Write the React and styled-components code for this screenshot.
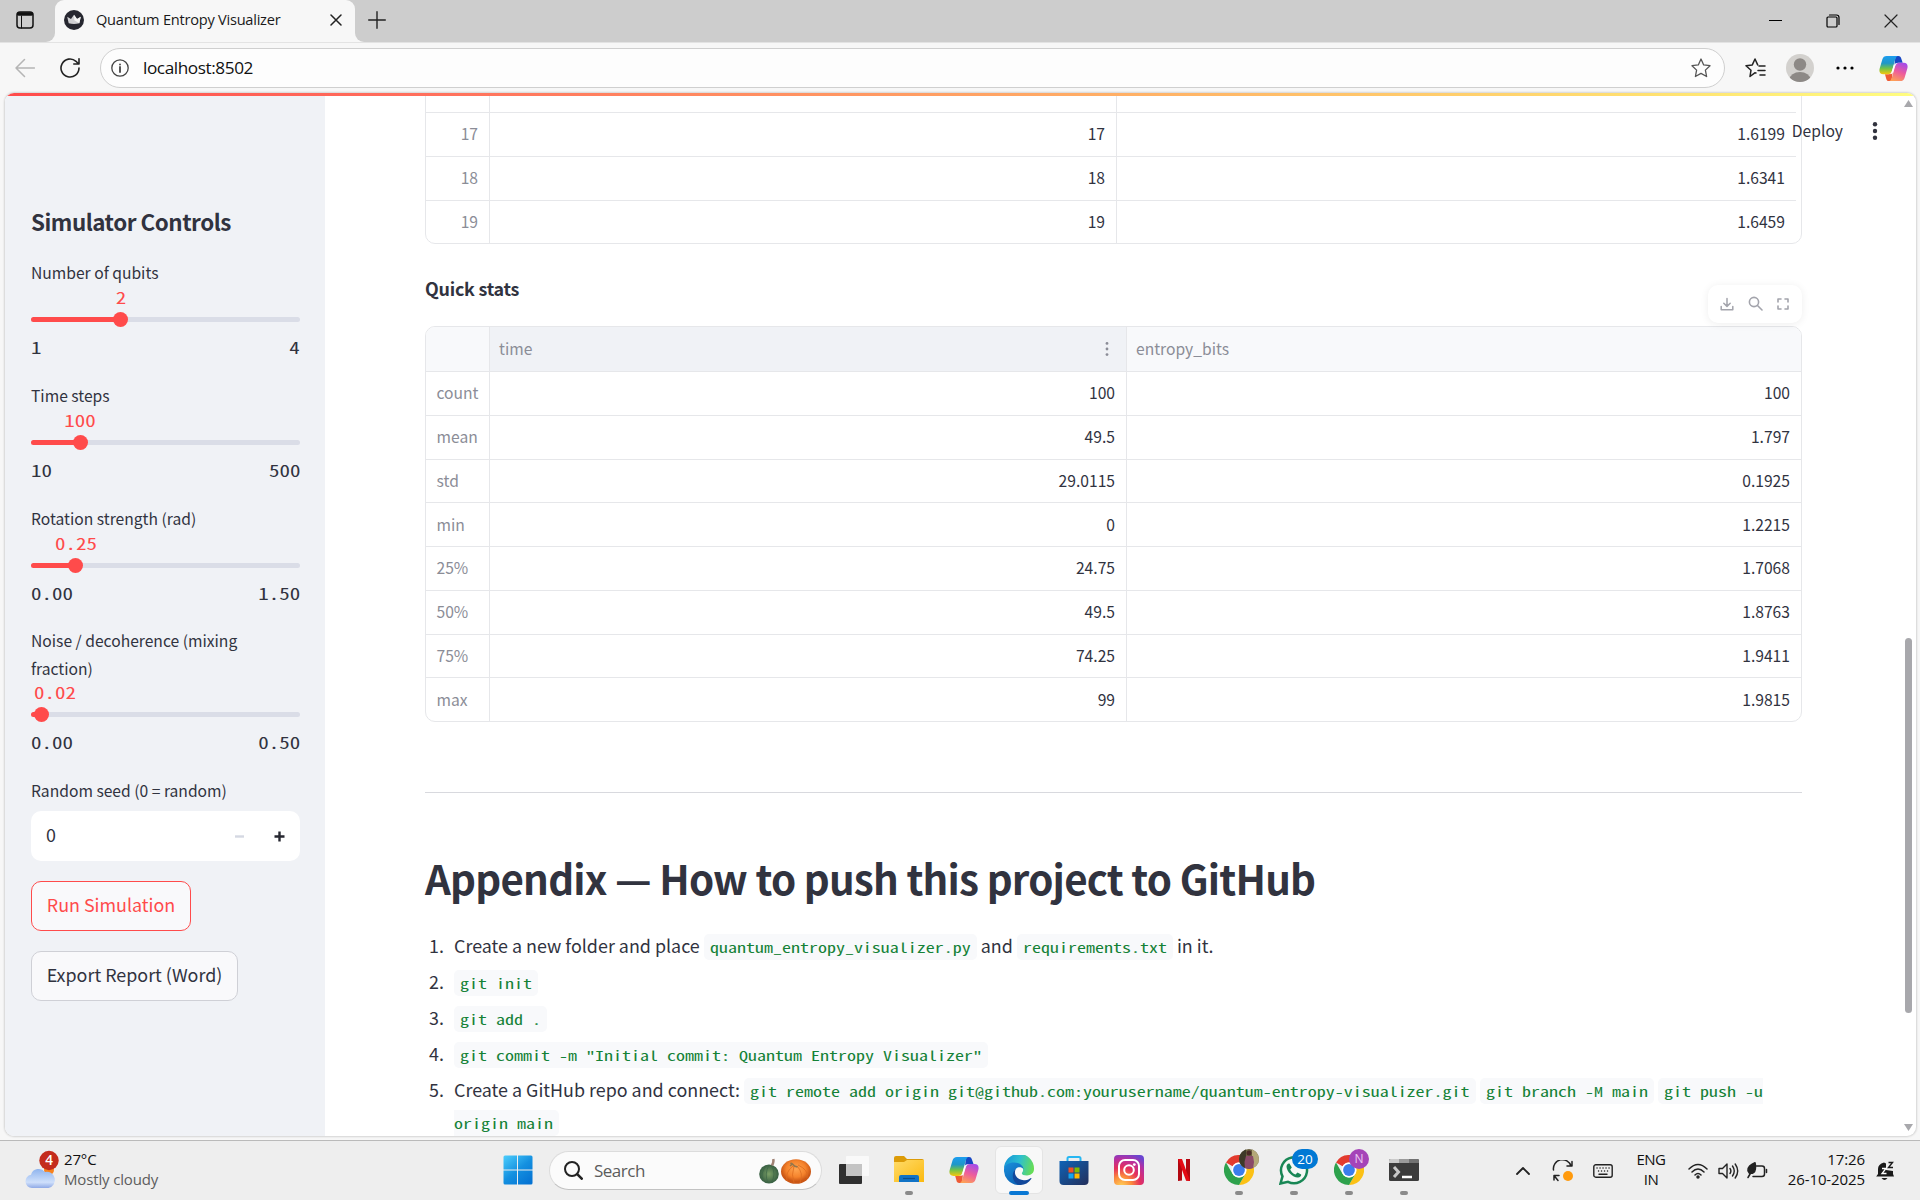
import React from 'react';
import styled, { createGlobalStyle, css } from 'styled-components';

const sans = '"Noto Sans CJK SC", "Noto Sans", sans-serif';
const mono = '"Noto Sans Mono CJK SC", "Liberation Mono", monospace';
const ui = '"Open Sans", "Noto Sans", sans-serif';

const Global = createGlobalStyle`
  *, *::before, *::after { box-sizing: border-box; }
  body { margin: 0; overflow: hidden; background: #f7f7f7; }
  svg { display: block; flex: none; }
`;

const Desktop = styled.div`
  display: flex;
  flex-direction: column;
  width: 1920px;
  height: 1200px;
  overflow: hidden;
  background: #f7f7f7;
  font-family: ${ui};
  color: #111;
`;

/* ---------- browser chrome ---------- */
const TabStrip = styled.header`
  display: flex;
  flex: none;
  height: 42px;
  background: #f7f7f7;
`;
const StripStart = styled.div`
  width: 55px;
  display: flex;
  align-items: center;
  padding: 0 0 2px 16px;
  background: #cdcdcd;
  border-bottom-right-radius: 9px;
`;
const TabWell = styled.div`
  width: 300px;
  background: linear-gradient(#cdcdcd 50%, #f7f7f7 50%);
`;
const Tab = styled.div`
  height: 42px;
  display: flex;
  align-items: center;
  padding: 0 13px 2px 9px;
  border-radius: 9px 9px 0 0;
  background: #f7f7f7;
`;
const TabTitle = styled.span`
  flex: 1;
  margin-left: 12px;
  padding-bottom: 2px;
  font-size: 14.6px;
  letter-spacing: -0.24px;
  line-height: 20px;
  color: #1a1a1a;
  white-space: nowrap;
`;
const StripRest = styled.div`
  flex: 1;
  display: flex;
  align-items: center;
  padding: 0 0 2px 13px;
  background: #cdcdcd;
  border-bottom-left-radius: 9px;
`;
const WindowButtons = styled.div`
  margin-left: auto;
  padding: 2px 22px 0 0;
  display: flex;
  gap: 44px;
`;
const Toolbar = styled.div`
  flex: none;
  height: 51px;
  display: flex;
  align-items: center;
  padding: 0 12px 0 15px;
  border-top: 1px solid #e3e3e3;
`;
const BackButton = styled.div`
  margin-right: 25px;
`;
const Address = styled.div`
  width: 1625px;
  height: 40px;
  margin-left: 20px;
  display: flex;
  align-items: center;
  padding: 0 13px 0 10px;
  border: 1px solid #cfcfcf;
  border-radius: 20px;
  background: #fdfdfd;
`;
const Url = styled.span`
  flex: 1;
  margin-left: 14px;
  padding-bottom: 1px;
  font-size: 17.2px;
  letter-spacing: -0.42px;
  line-height: 24px;
`;
const ToolbarActions = styled.div`
  flex: 1;
  display: flex;
  align-items: center;
  padding-left: 20px;
`;
const Avatar = styled.div`
  margin: 0 22px 0 20px;
`;
const MenuDots = styled.div`
  margin-right: 25px;
`;

/* ---------- page frame ---------- */
const Frame = styled.div`
  position: relative;
  flex: none;
  width: 1911px;
  height: 1043px;
  margin: 0 0 4px 5px;
  display: flex;
  flex-direction: column;
  overflow: hidden;
  border-radius: 9px;
  background: #fff;
  box-shadow: 0 0 2px 1px rgba(0, 0, 0, 0.14);
`;
const Decoration = styled.div`
  flex: none;
  height: 3px;
  background: linear-gradient(90deg, #ff4b4b, #ff6c5c 20%, #ffb266 60%, #ffe070 86%, #fffd80);
`;
const Columns = styled.div`
  flex: 1;
  min-height: 0;
  display: flex;
`;
const Scrollbar = styled.div`
  width: 15px;
  display: flex;
  flex-direction: column;
  align-items: center;
  padding: 4px 0 5px;
`;
const Thumb = styled.div`
  width: 7px;
  height: 375px;
  margin-top: 531px;
  margin-bottom: auto;
  border-radius: 4px;
  background: #a8a8ac;
`;

/* ---------- sidebar ---------- */
const Sidebar = styled.aside`
  flex: none;
  width: 320px;
  padding: 110px 25px 0 26px;
  background: #f0f2f6;
  font-family: ${sans};
  color: #31333f;
`;
const SideTitle = styled.h2`
  margin: 0 0 22px;
  font-size: 22.4px;
  font-weight: 600;
  letter-spacing: -0.48px;
  line-height: 30px;
  white-space: nowrap;
`;
const Field = styled.div`
  margin-bottom: 15px;
`;
const Label = styled.div`
  min-height: 30px;
  display: flex;
  align-items: center;
  font-size: 15.65px;
  line-height: 28px;
`;
const ValueRow = styled.div`
  position: relative;
  height: 21px;
`;
const Value = styled.span`
  position: absolute;
  top: -1px;
  transform: translateX(-50%) scaleX(1.34);
  font-family: ${mono};
  font-size: 15.67px;
  line-height: 21px;
  color: #ff4b4b;
`;
const TrackRow = styled.div`
  position: relative;
  height: 21px;
  padding: 8px 0;
`;
const Track = styled.div`
  height: 5px;
  border-radius: 3px;
  overflow: hidden;
  background: #dadde7;
`;
const Fill = styled.div`
  height: 5px;
  background: #ff4b4b;
`;
const Knob = styled.div`
  position: absolute;
  top: 3px;
  width: 15px;
  height: 15px;
  margin-left: -7.5px;
  border-radius: 50%;
  background: #ff4b4b;
`;
const Range = styled.div`
  height: 36px;
  display: flex;
  justify-content: space-between;
  align-items: center;
  padding-bottom: 2px;
  font-family: ${mono};
  font-size: 15.67px;
`;
const Bound = styled.span`
  transform: scaleX(1.34);
  transform-origin: ${(p) => (p.$end ? 'right' : 'left')} center;
`;
const NumberInput = styled.div`
  height: 50px;
  margin: 5px 0 20px;
  display: flex;
  align-items: center;
  padding: 0 15px;
  border-radius: 10px;
  background: #fff;
  font-size: 17.9px;
`;
const NumberValue = styled.span`
  padding-bottom: 4px;
`;
const Steps = styled.div`
  margin-left: auto;
  display: flex;
  gap: 29px;
`;
const Button = styled.button`
  display: block;
  height: 50px;
  width: ${(p) => p.$w}px;
  margin: 0 0 20px;
  padding: 0 0 5px;
  border: 1px solid ${(p) => (p.$active ? '#ff4b4b' : '#cfd0d6')};
  border-radius: 10px;
  background: #f9f9fb;
  color: ${(p) => (p.$active ? '#ff4b4b' : '#31333f')};
  font-family: ${sans};
  font-size: 17.9px;
  line-height: 30px;
  white-space: nowrap;
`;

/* ---------- main ---------- */
const Main = styled.main`
  position: relative;
  flex: 1;
  min-width: 0;
  padding: 0 99px 0 100px;
  overflow: hidden;
  font-family: ${sans};
  color: #31333f;
`;
const AppHeader = styled.div`
  position: absolute;
  top: 20px;
  right: 23px;
  display: flex;
  align-items: center;
  gap: 29px;
  font-size: 15.65px;
  line-height: 30px;
`;
const Table = styled.div`
  margin-top: ${(p) => p.$top}px;
  border: 1px solid #e6e7ea;
  border-radius: 10px;
  overflow: hidden;
`;
const Row = styled.div`
  display: grid;
  grid-template-columns: 63px ${(p) => p.$first}px 1fr;
  height: ${(p) => (p.$head ? 44.25 : 43.75)}px;
  font-size: 15.65px;
  ${(p) => p.$gutter && css`margin-right: 5px;`}
  & + & { border-top: 1px solid #e6e7ea; }
`;
const Cell = styled.div`
  display: flex;
  align-items: center;
  justify-content: ${(p) => (p.$left ? 'flex-start' : 'flex-end')};
  padding: 0 11px 1.5px ${(p) => p.$pad || 9}px;
  color: ${(p) => (p.$muted ? '#8b8d97' : '#31333f')};
  background: ${(p) => p.$bg || 'transparent'};
  & + & { border-left: 1px solid #e6e7ea; }
`;
const CellText = styled.span`
  flex: 1;
`;
const ColumnMenu = styled.div`
  padding: 1px 5px 0 0;
`;
const SectionTitle = styled.h4`
  margin: 27.7px 0 0;
  font-size: 17.9px;
  font-weight: 600;
  letter-spacing: -0.24px;
  line-height: 32px;
`;
const TableArea = styled.div`
  position: relative;
`;
const TableTools = styled.div`
  position: absolute;
  right: 0;
  top: -41px;
  width: 94px;
  height: 38px;
  display: flex;
  align-items: center;
  justify-content: space-between;
  padding: 0 13px 0 12px;
  border-radius: 10px;
  background: #fff;
  box-shadow: 0 1px 8px rgba(0, 0, 0, 0.07);
`;
const Rule = styled.hr`
  height: 1px;
  margin: 70px 0 58px;
  border: 0;
  background: #d8d9de;
`;
const Heading = styled.h1`
  margin: 0;
  font-size: 40.3px;
  font-weight: 600;
  letter-spacing: -0.77px;
  line-height: 54px;
  white-space: nowrap;
`;
const StepList = styled.ol`
  margin: 24.3px 0 0;
  padding: 0;
  list-style: none;
`;
const Step = styled.li`
  display: flex;
  margin-bottom: 4px;
  font-size: 17.9px;
  line-height: 32px;
`;
const Marker = styled.span`
  flex: none;
  width: 29px;
  padding-left: 4px;
`;
const CodeBox = styled.code`
  padding: 3px 6px;
  border-radius: 5px;
  background: #f8f9fb;
  color: #158237;
  font-family: ${mono};
  font-size: 13.43px;
  line-height: 19px;
  word-spacing: 2.28px;
`;
const WordBox = styled.span`
  display: inline-block;
  width: ${(p) => p.$chars * 9}px;
  white-space: nowrap;
`;
const WideGlyphs = styled.span`
  display: inline-block;
  transform: scaleX(1.34);
  transform-origin: left center;
`;

/* ---------- taskbar ---------- */
const Taskbar = styled.footer`
  flex: none;
  height: 60px;
  display: flex;
  align-items: center;
  border-top: 1px solid #bababa;
  background: #eeeeee;
`;
const Weather = styled.div`
  width: 490px;
  display: flex;
  align-items: center;
  padding: 0 0 3px 25px;
  gap: 5px;
`;
const Stack = styled.div`
  display: flex;
  flex-direction: column;
  align-items: ${(p) => p.$align || 'flex-start'};
  padding-bottom: ${(p) => p.$lift || 0}px;
  font-size: 15px;
  line-height: 20px;
  letter-spacing: ${(p) => p.$ls || 0}px;
  white-space: nowrap;
`;
const Muted = styled.span`
  color: #5d5d5d;
`;
const Apps = styled.nav`
  display: flex;
  align-items: center;
`;
const TaskApp = styled.div`
  position: relative;
  width: 55px;
  height: 58px;
  display: flex;
  align-items: center;
  justify-content: center;
  padding-bottom: 1px;
  &::after {
    content: '';
    position: absolute;
    bottom: 5px;
    left: 50%;
    width: ${(p) => (p.$active ? 20 : 8)}px;
    height: 4px;
    transform: translateX(-50%);
    border-radius: 2px;
    background: ${(p) => (p.$active ? '#0a78d4' : '#8a8a8a')};
    display: ${(p) => (p.$open || p.$active ? 'block' : 'none')};
  }
`;
const ActiveTile = styled.div`
  width: 48px;
  height: 48px;
  display: flex;
  align-items: center;
  justify-content: center;
  border: 1px solid #e4e4e4;
  border-radius: 6px;
  background: #f8f8f8;
`;
const Badge = styled.div`
  position: absolute;
  top: 7px;
  left: ${(p) => p.$x}px;
  width: ${(p) => p.$w}px;
  height: 20px;
  display: flex;
  align-items: center;
  justify-content: center;
  border-radius: 10px;
  background: ${(p) => p.$bg};
  color: ${(p) => p.$fg || '#fff'};
  font-size: ${(p) => p.$size || 12.5}px;
  overflow: hidden;
`;
const Search = styled.div`
  width: 273px;
  height: 39px;
  margin: 0 4px;
  display: flex;
  align-items: center;
  padding: 0 10px 0 14px;
  border: 1px solid #dcdcdc;
  border-bottom-color: #c2c2c2;
  border-radius: 20px;
  background: #fbfbfb;
  font-size: 17px;
  color: #5c5c5c;
`;
const SearchText = styled.span`
  flex: 1;
  margin-left: 11px;
  letter-spacing: -0.5px;
`;
const Tray = styled.div`
  margin-left: auto;
  display: flex;
  align-items: center;
  padding-right: 15px;
`;
const TrayItem = styled.div`
  width: ${(p) => p.$w}px;
  display: flex;
  justify-content: ${(p) => (p.$end ? 'flex-end' : 'center')};
`;

/* ---------- icons ---------- */
const Line = ({ w = 20, h, vb, sw = 1.5, c = '#222', children, fill = 'none' }) => (
  <svg width={w} height={h || w} viewBox={vb || `0 0 ${w} ${h || w}`} fill={fill} stroke={c} strokeWidth={sw} strokeLinecap="round" strokeLinejoin="round">
    {children}
  </svg>
);

const Crown = () => (
  <svg width="20" height="20" viewBox="0 0 20 20">
    <circle cx="10" cy="10" r="10" fill="#262730" />
    <path d="M3.200 6.800 7 9l3-4.200L13 9l3.800-2.200-1.500 6.400q-5.300 1.600-10.600 0Z" fill="#cfcfd2" />
    <path d="m10 4.800 3 4.200 3.800-2.200-1.500 6.400-5-3Z" fill="#f4f4f4" />
  </svg>
);

const Copilot = ({ size = 30, id }) => (
  <svg width={size} height={size} viewBox="0 0 30 30">
    <defs>
      <linearGradient id={`${id}a`} x1="0" y1="0" x2="0" y2="1">
        <stop offset="0" stopColor="#1c9df0" />
        <stop offset=".4" stopColor="#1f97c8" />
        <stop offset=".68" stopColor="#6fc24a" />
        <stop offset="1" stopColor="#f6c60d" />
      </linearGradient>
      <linearGradient id={`${id}b`} x1=".7" y1="0" x2=".3" y2="1">
        <stop offset="0" stopColor="#a64ce8" />
        <stop offset=".5" stopColor="#ee5c9c" />
        <stop offset="1" stopColor="#fda057" />
      </linearGradient>
    </defs>
    <path d="M17 2h3c2 0 2.500 1.200 3 2.700L24.500 9H20c-2.500 0-3.500 1.500-4.200 4Z" fill="#1747c4" />
    <path d="M13 28h-2.600c-2 0-2.600-1-3-2.700L6.200 21H10c2.500 0 3.500-1.500 4.200-4Z" fill="#ee5a35" />
    <path d="M8 2h11.500c-1.600.6-2.300 2-3 4.500l-3 10.500c-.7 2.500-2 3.900-4.500 3.900H4.500C1 20.900-.2 18.500.7 15L3.500 5.500C4.200 3.200 5.500 2 8 2Z" fill={`url(#${id}a)`} />
    <path d="M22 28H10.700c1.500-.6 2.200-2 2.900-4.500l3-10.500c.7-2.500 2-3.900 4.500-3.900h4.500c3.400 0 4.600 2.400 3.700 5.900l-2.800 9.500c-.7 2.300-2 3.500-4.500 3.500Z" fill={`url(#${id}b)`} />
    <path d="M18.500 9.300q-1.500 1-2.300 4l-1.800 5.900q-.8 1.700-2.400 1.700.9-1 1.500-3.200l1.800-6q.8-2.300 3.200-2.400Z" fill="#fff" />
  </svg>
);

const Chrome = () => (
  <svg width="30" height="30" viewBox="-15 -15 30 30">
    <path d="M-13 -7.500A15 15 0 0 1 13 -7.500H0A7.500 7.500 0 0 0-6.500-3.700Z" fill="#e33b2e" />
    <path d="M13-7.500A15 15 0 0 1 0 15L6.500 3.700A7.500 7.500 0 0 0 0-7.500Z" fill="#fbc116" />
    <path d="M0 15A15 15 0 0 1-13-7.500L-6.500 3.700A7.500 7.500 0 0 0 6.500 3.700Z" fill="#2da14c" />
    <circle r="7.400" fill="#fff" />
    <circle r="5.900" fill="#3b7ded" />
  </svg>
);

const Edge = () => (
  <svg width="30" height="30" viewBox="0 0 30 30">
    <defs>
      <linearGradient id="eTop" x1="0" y1=".3" x2="1" y2=".5">
        <stop offset="0" stopColor="#1795d8" />
        <stop offset=".5" stopColor="#2dbfd0" />
        <stop offset="1" stopColor="#67dd55" />
      </linearGradient>
      <linearGradient id="eLow" x1="0" y1="0" x2=".6" y2="1">
        <stop offset="0" stopColor="#1a90dc" />
        <stop offset="1" stopColor="#0c62b4" />
      </linearGradient>
    </defs>
    <path d="M0 14A15 15 0 0 1 30 13.500c.2 4.500-3 7-7 7-3.500 0-5.300-1-5.100-2.200.2-1 1.200-1.500 1.200-3.500C19.100 11 15.500 8.800 11 8.800 5 8.800 1 11.500 0 14Z" fill="url(#eTop)" />
    <path d="M0 14C.5 10 5 7.500 10 7.500c6 0 9.500 3.200 9.500 6.800-2-2.800-6.500-2.600-8.500.7-2.700 4.500.5 12 7.500 13.700-1.200.9-3.500 1.300-5 1.200A15 15 0 0 1 0 14Z" fill="url(#eLow)" />
    <path d="M12 13.500c-3.500 6 2 12.500 9 11.700 2.700-.3 4.500-1.300 5.500-2 .7-.4 1.200 0 .7.700C24.500 28 20 30.200 15.500 30 9 28.500 6 19 12 13.500Z" fill="#12489b" />
  </svg>
);

const Store = () => (
  <svg width="30" height="30" viewBox="0 0 30 30">
    <defs>
      <linearGradient id="st" x1="0" y1="0" x2="1" y2="1">
        <stop offset="0" stopColor="#0f63b6" />
        <stop offset="1" stopColor="#232f5b" />
      </linearGradient>
    </defs>
    <path d="M8.500 8V3.500Q8.500 2 10 2h10q1.500 0 1.500 1.500V8" fill="none" stroke="#27b7f2" strokeWidth="2" />
    <path d="M.5 6h29v20q0 4-4 4h-21q-4 0-4-4Z" fill="url(#st)" />
    <path d="M9.500 12.500h5v5h-5z" fill="#f25022" />
    <path d="M15.500 12.500h5v5h-5z" fill="#7fba00" />
    <path d="M9.500 18.500h5v5h-5z" fill="#12a5ee" />
    <path d="M15.500 18.500h5v5h-5z" fill="#ffb900" />
  </svg>
);

const Instagram = () => (
  <svg width="30" height="30" viewBox="0 0 30 30">
    <defs>
      <radialGradient id="ig" cx=".25" cy="1.050" r="1.150">
        <stop offset="0" stopColor="#ffd35a" />
        <stop offset=".3" stopColor="#fb8a3c" />
        <stop offset=".55" stopColor="#e52f5c" />
        <stop offset=".8" stopColor="#b72fa0" />
        <stop offset="1" stopColor="#6b45d0" />
      </radialGradient>
    </defs>
    <rect width="30" height="30" rx="4" fill="url(#ig)" />
    <g fill="none" stroke="#fff" strokeWidth="2">
      <rect x="5" y="5" width="20" height="20" rx="6" />
      <circle cx="15" cy="15" r="4.800" />
    </g>
    <circle cx="20.300" cy="9.600" r="1.400" fill="#fff" />
  </svg>
);

const Netflix = () => (
  <svg width="12" height="22" viewBox="0 0 12 22">
    <path d="M0 0h4v21.500l-4 .5ZM8 0h4v22l-4-.5Z" fill="#b20710" />
    <path d="M0 0h4l8 22-4-.5Z" fill="#e50914" />
  </svg>
);

const WhatsApp = () => (
  <svg width="30" height="30" viewBox="0 0 30 30">
    <path d="m1.500 28.500 2-7.200A13 13 0 1 1 9 26.800Z" fill="#f4f8f5" stroke="#188755" strokeWidth="2.500" />
    <path d="M10.500 8.500c-1.500-.5-3 1-3 3 0 5 6.500 11.300 11.500 11 2 0 3.500-1.700 3.200-3l-3.700-2-2 2c-2.500-.8-4.500-3-5.300-5l1.600-2Z" fill="#188755" />
  </svg>
);

const Folder = () => (
  <svg width="30" height="28" viewBox="0 0 30 28">
    <defs>
      <linearGradient id="fo" x1="0" y1="0" x2="1" y2="1">
        <stop offset="0" stopColor="#ffdb69" />
        <stop offset="1" stopColor="#fbb90f" />
      </linearGradient>
    </defs>
    <path d="M0 2q0-2 2-2h8l3 3h15q2 0 2 2v4H0Z" fill="#dc9b07" />
    <path d="M0 6h10l3-2h17v22H0Z" fill="url(#fo)" />
    <path d="M5 26v-5q0-2 2-2h16q2 0 2 2v5Z" fill="#1173c6" />
    <path d="M9 22.500h12" stroke="#0b4e8d" strokeWidth="1.200" />
  </svg>
);

const Terminal = () => (
  <svg width="30" height="22" viewBox="0 0 30 22">
    <rect width="30" height="22" rx="1.500" fill="#3c3c3c" />
    <path d="M0 4V1.500Q0 0 1.500 0H10v4Z" fill="#cbcbcb" />
    <path d="M10 0h10v4H10z" fill="#9a9a9a" />
    <path d="M20 0h8.500Q30 0 30 1.500V4H20z" fill="#727272" />
    <path d="m5 8 4.500 5L5 18" fill="none" stroke="#c9c9c9" strokeWidth="3" />
    <path d="M13 18h10" stroke="#fff" strokeWidth="2.500" />
  </svg>
);

const Pumpkins = () => (
  <svg width="52" height="26" viewBox="0 0 52 26">
    <defs>
      <radialGradient id="pg"><stop offset="0" stopColor="#7ba066" /><stop offset="1" stopColor="#375e42" /></radialGradient>
      <radialGradient id="po" cy=".4"><stop offset="0" stopColor="#ffa550" /><stop offset=".65" stopColor="#f5832c" /><stop offset="1" stopColor="#cb5715" /></radialGradient>
    </defs>
    <ellipse cx="10" cy="16" rx="9.800" ry="9.500" fill="url(#pg)" />
    <path d="M10 7q-5 9-1 18M12 7q6 9 0 18M7 8q-6 8-3 13" fill="none" stroke="#3c6546" strokeWidth=".7" />
    <path d="M13 7.500q2-4 1.300-6.500" fill="none" stroke="#a08274" strokeWidth="2.500" />
    <ellipse cx="37" cy="13.500" rx="15" ry="12.300" fill="url(#po)" />
    <path d="M34 8q-8 6-6 15M35 8q-3 9 0 17M38 8q7 7 3 17M39 7q11 5 9 13" fill="none" stroke="#dd6c20" strokeWidth=".8" />
    <path d="m31 8 2.500-2 2 2 3 1M33 6l-1.500-1" fill="none" stroke="#94764c" strokeWidth="1.600" />
  </svg>
);

const WinLogo = () => (
  <svg width="30" height="30" viewBox="0 0 30 30">
    <defs>
      <linearGradient id="wl" gradientUnits="userSpaceOnUse" x1="0" y1="0" x2="24" y2="30">
        <stop offset="0" stopColor="#4fd0fd" />
        <stop offset=".55" stopColor="#1490e0" />
        <stop offset="1" stopColor="#0573d3" />
      </linearGradient>
    </defs>
    <path d="M.5 2q0-1.500 1.500-1.500h12v14H.5zM15 .5h13q1.500 0 1.500 1.500v12.500H15zM.5 15.500H14v14H2Q.5 29.500.5 28zM15 15.500h14.500V28q0 1.500-1.500 1.500H15z" fill="url(#wl)" />
  </svg>
);

const TaskView = () => (
  <svg width="30" height="28" viewBox="0 0 30 28">
    <rect x="0" y="8" width="23" height="20" rx="1" fill="#2f2f2f" />
    <rect x="7" y="0" width="23" height="20" rx="1" fill="#fafafa" opacity=".93" />
    <path d="M7 8h16v12H7z" fill="#c4c4c4" />
  </svg>
);

const Cloud = () => (
  <svg width="34" height="38" viewBox="0 0 34 38">
    <defs>
      <linearGradient id="cl" x1="0" y1="0" x2="0" y2="1">
        <stop offset="0" stopColor="#8fb4ee" />
        <stop offset=".7" stopColor="#cfe0fb" />
        <stop offset="1" stopColor="#8fa9e6" />
      </linearGradient>
    </defs>
    <circle cx="24" cy="20" r="5" fill="#f7821e" />
    <path d="M7 38a6.700 6.700 0 0 1-1-13.300A8 8 0 0 1 20 22a7.500 7.500 0 0 1 3.500 16Z" fill="url(#cl)" />
    <circle cx="24" cy="10.500" r="9.700" fill="#c42b1c" />
    <text x="24" y="15.300" textAnchor="middle" fontFamily="Open Sans" fontWeight="600" fontSize="13.500" fill="#fff">4</text>
  </svg>
);

const Kebab = ({ h = 18, r = 2.200, c = '#31333f' }) => (
  <svg width="6" height={h} viewBox={`0 0 6 ${h}`} fill={c}>
    <circle cx="3" cy={r} r={r} />
    <circle cx="3" cy={h / 2} r={r} />
    <circle cx="3" cy={h - r} r={r} />
  </svg>
);

/* ---------- pieces ---------- */
const sliders = [
  { label: 'Number of qubits', value: '2', min: '1', max: '4', pct: 33.333 },
  { label: 'Time steps', value: '100', min: '10', max: '500', pct: 18.367 },
  { label: 'Rotation strength (rad)', value: '0.25', min: '0.00', max: '1.50', pct: 16.667 },
  { label: 'Noise / decoherence (mixing fraction)', value: '0.02', min: '0.00', max: '0.50', pct: 4 },
];

const Slider = ({ label, value, min, max, pct }) => (
  <Field>
    <Label>{label}</Label>
    <ValueRow>
      <Value style={{ left: `${Math.max(pct, value.length * 2.2)}%` }}>{value}</Value>
    </ValueRow>
    <TrackRow>
      <Track><Fill style={{ width: `${pct}%` }} /></Track>
      <Knob style={{ left: `${pct}%` }} />
    </TrackRow>
    <Range><Bound>{min}</Bound><Bound $end>{max}</Bound></Range>
  </Field>
);

/* Inline code on a 9px character grid; wraps between words. */
const Code = ({ children }) => (
  <CodeBox>
    {children.split(' ').map((word, i) => (
      <React.Fragment key={i}>
        {i > 0 && ' '}
        <WordBox $chars={word.length}><WideGlyphs>{word}</WideGlyphs></WordBox>
      </React.Fragment>
    ))}
  </CodeBox>
);

const series = [
  ['16', '16', '1.6054'],
  ['17', '17', '1.6199'],
  ['18', '18', '1.6341'],
  ['19', '19', '1.6459'],
];
const stats = [
  ['count', '100', '100'],
  ['mean', '49.5', '1.797'],
  ['std', '29.0115', '0.1925'],
  ['min', '0', '1.2215'],
  ['25%', '24.75', '1.7068'],
  ['50%', '49.5', '1.8763'],
  ['75%', '74.25', '1.9411'],
  ['max', '99', '1.9815'],
];

const BrowserChrome = () => (
  <>
    <TabStrip>
      <StripStart>
        <Line w={18} sw={1.5} c="#111">
          <rect x="1" y="1" width="16" height="16" rx="3" />
          <path d="M2.500 3h13" strokeWidth="3.400" />
          <path d="M5.500 5v12" strokeWidth="1" />
        </Line>
      </StripStart>
      <TabWell>
        <Tab>
          <Crown />
          <TabTitle>Quantum Entropy Visualizer</TabTitle>
          <Line w={12}><path d="m1 1 10 10M11 1 1 11" /></Line>
        </Tab>
      </TabWell>
      <StripRest>
        <Line w={18} sw={1.4}><path d="M9 .7v16.600M.7 9h16.600" /></Line>
        <WindowButtons>
          <Line w={13} c="#000" sw={1.2}><path d="M0 6.500h13" /></Line>
          <Line w={14} c="#000" sw={1.2}>
            <rect x="1" y="3" width="10" height="10" rx="1" />
            <path d="M3.500 1h7q2.500 0 2.500 2.500v7" />
          </Line>
          <Line w={14} c="#222" sw={1.2}><path d="m1 1 12 12M13 1 1 13" /></Line>
        </WindowButtons>
      </StripRest>
    </TabStrip>
    <Toolbar>
      <BackButton><Line w={20} c="#b5b5b5"><path d="M19.500 10H1M9.500 1.500 1 10l8.500 8.500" /></Line></BackButton>
      <Line w={20} sw={1.6}>
        <path d="M19 10A9 9 0 1 1 16 3.300L18.600 6M19 .8V6h-5.200" />
      </Line>
      <Address>
        <Line w={18} sw={1.3} c="#444"><circle cx="9" cy="9" r="8.200" /><path d="M9 8v5M9 5.300v.2" strokeWidth="1.800" /></Line>
        <Url>localhost:8502</Url>
        <Line w={20} sw={1.300} c="#555"><path d="m10 1 2.700 5.900 6.300.8-4.600 4.400 1.200 6.400L10 15.400l-5.600 3.100 1.200-6.400L1 7.700l6.300-.8Z" /></Line>
      </Address>
      <ToolbarActions>
        <Line w={21} h={20} sw={1.5}>
          <path d="M11 15 9.800 14.800 5 18.500l1-6.300L1 7.700l6.300-.8L10 1l2.700 5.900M14 8h6M13 12.500h7M15 17h5" />
        </Line>
        <Avatar>
          <svg width="28" height="28" viewBox="0 0 28 28">
            <clipPath id="av"><circle cx="14" cy="14" r="14" /></clipPath>
            <g clipPath="url(#av)">
              <path d="M0 0h28v28H0z" fill="#d3d1ce" />
              <circle cx="14" cy="10.500" r="6.200" fill="#8d8986" />
              <ellipse cx="14" cy="25.500" rx="10.500" ry="7.500" fill="#8d8986" />
            </g>
          </svg>
        </Avatar>
        <MenuDots>
          <svg width="18" height="4" viewBox="0 0 18 4"><circle cx="2" cy="2" r="1.600" /><circle cx="9" cy="2" r="1.600" /><circle cx="16" cy="2" r="1.600" /></svg>
        </MenuDots>
        <Copilot id="top" size={29} />
      </ToolbarActions>
    </Toolbar>
  </>
);

const MainPane = () => (
  <Main>
    <Table $top={-28.75}>
      {series.map((r) => (
        <Row key={r[0]} $first={627} $gutter>
          <Cell $muted>{r[0]}</Cell>
          <Cell>{r[1]}</Cell>
          <Cell>{r[2]}</Cell>
        </Row>
      ))}
    </Table>
    <SectionTitle>Quick stats</SectionTitle>
    <TableArea>
      <Table $top={22}>
        <Row $head $first={637}>
          <Cell $bg="#f8f9fb" />
          <Cell $left $muted $bg="#f0f2f6">
            <CellText>time</CellText>
            <ColumnMenu><Kebab h={14} r={1.400} c="#8b8d97" /></ColumnMenu>
          </Cell>
          <Cell $left $muted $bg="#f8f9fb">entropy_bits</Cell>
        </Row>
        {stats.map((r) => (
          <Row key={r[0]} $first={637}>
            <Cell $left $muted $pad={10.5}>{r[0]}</Cell>
            <Cell>{r[1]}</Cell>
            <Cell>{r[2]}</Cell>
          </Row>
        ))}
      </Table>
      <TableTools>
        <Line w={14} c="#a3a4ac" sw={1.5}><path d="M7 1.500V9M3.800 6.300 7 9.400l3.200-3.100M1.200 9.500v3.300h11.600V9.500" /></Line>
        <Line w={15} c="#a3a4ac" sw={1.600}><circle cx="6" cy="6" r="4.600" /><path d="m9.500 9.500 4.500 4.500" /></Line>
        <Line w={12} c="#a3a4ac" sw={1.600}><path d="M1 4V1h3M8 1h3v3M11 8v3H8M4 11H1V8" /></Line>
      </TableTools>
    </TableArea>
    <Rule />
    <Heading>Appendix — How to push this project to GitHub</Heading>
    <StepList>
      <Step><Marker>1.</Marker><div>Create a new folder and place <Code>quantum_entropy_visualizer.py</Code> and <Code>requirements.txt</Code> in it.</div></Step>
      <Step><Marker>2.</Marker><div><Code>git init</Code></div></Step>
      <Step><Marker>3.</Marker><div><Code>git add .</Code></div></Step>
      <Step><Marker>4.</Marker><div><Code>git commit -m "Initial commit: Quantum Entropy Visualizer"</Code></div></Step>
      <Step><Marker>5.</Marker><div>Create a GitHub repo and connect: <Code>git remote add origin git@github.com:yourusername/quantum-entropy-visualizer.git</Code> <Code>git branch -M main</Code> <Code>git push -u origin main</Code></div></Step>
    </StepList>
    <AppHeader><span>Deploy</span><Kebab /></AppHeader>
  </Main>
);

const Bar = () => (
  <Taskbar>
    <Weather>
      <Cloud />
      <Stack $ls={-0.15}><span>27°C</span><Muted>Mostly cloudy</Muted></Stack>
    </Weather>
    <Apps>
      <TaskApp><WinLogo /></TaskApp>
      <Search>
        <Line w={19} sw={2}><circle cx="8" cy="8" r="7" /><path d="m13.200 13.200 4.500 4.500" strokeWidth="2.600" /></Line>
        <SearchText>Search</SearchText>
        <Pumpkins />
      </Search>
      <TaskApp><TaskView /></TaskApp>
      <TaskApp $open><Folder /></TaskApp>
      <TaskApp><Copilot id="bar" /></TaskApp>
      <TaskApp $active><ActiveTile><Edge /></ActiveTile></TaskApp>
      <TaskApp><Store /></TaskApp>
      <TaskApp><Instagram /></TaskApp>
      <TaskApp><Netflix /></TaskApp>
      <TaskApp $open>
        <Chrome />
        <Badge $x={28} $w={20} $bg="#6b6240">
          <svg width="20" height="20" viewBox="0 0 20 20">
            <path d="M0 0h7v20H0z" fill="#3e3a28" /><path d="M13 0h7v20h-7z" fill="#b4a878" />
            <circle cx="10" cy="4" r="2.500" fill="#4a2a26" />
            <path d="M7 7h7l1 6-1 7H6l-.5-7Z" fill="#8a4a68" />
          </svg>
        </Badge>
      </TaskApp>
      <TaskApp $open><WhatsApp /><Badge $x={26} $w={26} $bg="#0078d4" $size={13.5}>20</Badge></TaskApp>
      <TaskApp $open><Chrome /><Badge $x={28} $w={20} $bg="#a544b8" $fg="#edc8f3" $size={12}>N</Badge></TaskApp>
      <TaskApp $open><Terminal /></TaskApp>
    </Apps>
    <Tray>
      <TrayItem $w={40}><Line w={14} h={8} sw={1.800}><path d="m1 7 6-6 6 6" /></Line></TrayItem>
      <TrayItem $w={40}>
        <Line w={22} h={22} sw={1.500}>
          <path d="M1.500 10A9 9 0 0 1 19 6M20 1.500V6h-5M6 20.500 2 15.500h5M2 15.500V20" />
          <circle cx="16" cy="16" r="5" fill="#ff9a0d" stroke="none" />
        </Line>
      </TrayItem>
      <TrayItem $w={40}>
        <Line w={20} h={14} sw={1.400}>
          <rect x=".8" y=".8" width="18.400" height="12.400" rx="2" />
          <path d="M4 4h.1M7 4h.1M10 4h.1M13 4h.1M16 4h.1M5.500 7h.1M8.500 7h.1M11.500 7h.1M14.500 7h.1M6 10.300h8" />
        </Line>
      </TrayItem>
      <TrayItem $w={56}><Stack $align="center" $ls={-0.5} $lift={3}><span>ENG</span><span>IN</span></Stack></TrayItem>
      <TrayItem $w={38}>
        <Line w={20} h={16} sw={1.500}>
          <path d="M1 6q9-9 18 0M4 9q6-6 12 0M7 12q3-3 6 0" />
          <circle cx="10" cy="14" r="1" fill="#222" />
        </Line>
      </TrayItem>
      <TrayItem $w={22}>
        <Line w={21} h={18} sw={1.400}>
          <path d="M1 6.500h3.500L9 2v14l-4.500-4.500H1ZM12 6.500q1.800 2.500 0 5M14.500 4q3.500 5 0 10M17.200 2q5 7 0 14" />
        </Line>
      </TrayItem>
      <TrayItem $w={36}>
        <Line w={21} h={17} sw={1.500}>
          <path d="M9.500 4h5.500q2.500 0 2.500 2.500v5.500q0 2.500-2.500 2.500H6M19.500 7.500v3" />
          <path d="M8 .8q-7.500 3-7 8l1.500 2.500q5 .500 5.800-4Q8.800 4 8 .8Z" fill="#222" />
          <path d="M1 15.500 6 7" />
        </Line>
      </TrayItem>
      <TrayItem $w={90} $end><Stack $align="flex-end" $ls={-0.1} $lift={3}><span>17:26</span><span>26-10-2025</span></Stack></TrayItem>
      <TrayItem $w={40}>
        <svg width="18" height="20" viewBox="0 0 18 20">
          <path d="M2 13V8q0-5 6-6.500l2 1V9l7 1v3l1 2.500H.2Z" fill="#1a1a1a" />
          <path d="M5.500 17h6q-3 4-6 0Z" fill="#1a1a1a" />
          <path d="M6 7.500h4l-4 5h4.500" fill="none" stroke="#fff" strokeWidth="1.300" />
          <path d="M12.500 1.500h4l-4 5h4.500" fill="none" stroke="#1a1a1a" strokeWidth="1.400" />
        </svg>
      </TrayItem>
    </Tray>
  </Taskbar>
);

export default function App() {
  return (
    <Desktop>
      <Global />
      <BrowserChrome />
      <Frame>
        <Decoration />
        <Columns>
          <Sidebar>
            <SideTitle>Simulator Controls</SideTitle>
            {sliders.map((s) => <Slider key={s.label} {...s} />)}
            <Label>Random seed (0 = random)</Label>
            <NumberInput>
              <NumberValue>0</NumberValue>
              <Steps>
                <Line w={11} sw={2.400} c="#d5d8e2"><path d="M1 5.500h9" strokeLinecap="butt" /></Line>
                <Line w={11} sw={2.400} c="#262730"><path d="M.5 5.500h10M5.500.5v10" strokeLinecap="butt" /></Line>
              </Steps>
            </NumberInput>
            <Button $w={160} $active>Run Simulation</Button>
            <Button $w={207}>Export Report (Word)</Button>
          </Sidebar>
          <MainPane />
          <Scrollbar>
            <svg width="9" height="7" viewBox="0 0 9 7"><path d="M0 7 4.500 0 9 7Z" fill="#a8a8ac" /></svg>
            <Thumb />
            <svg width="9" height="7" viewBox="0 0 9 7"><path d="M0 0h9L4.500 7Z" fill="#a8a8ac" /></svg>
          </Scrollbar>
        </Columns>
      </Frame>
      <Bar />
    </Desktop>
  );
}
